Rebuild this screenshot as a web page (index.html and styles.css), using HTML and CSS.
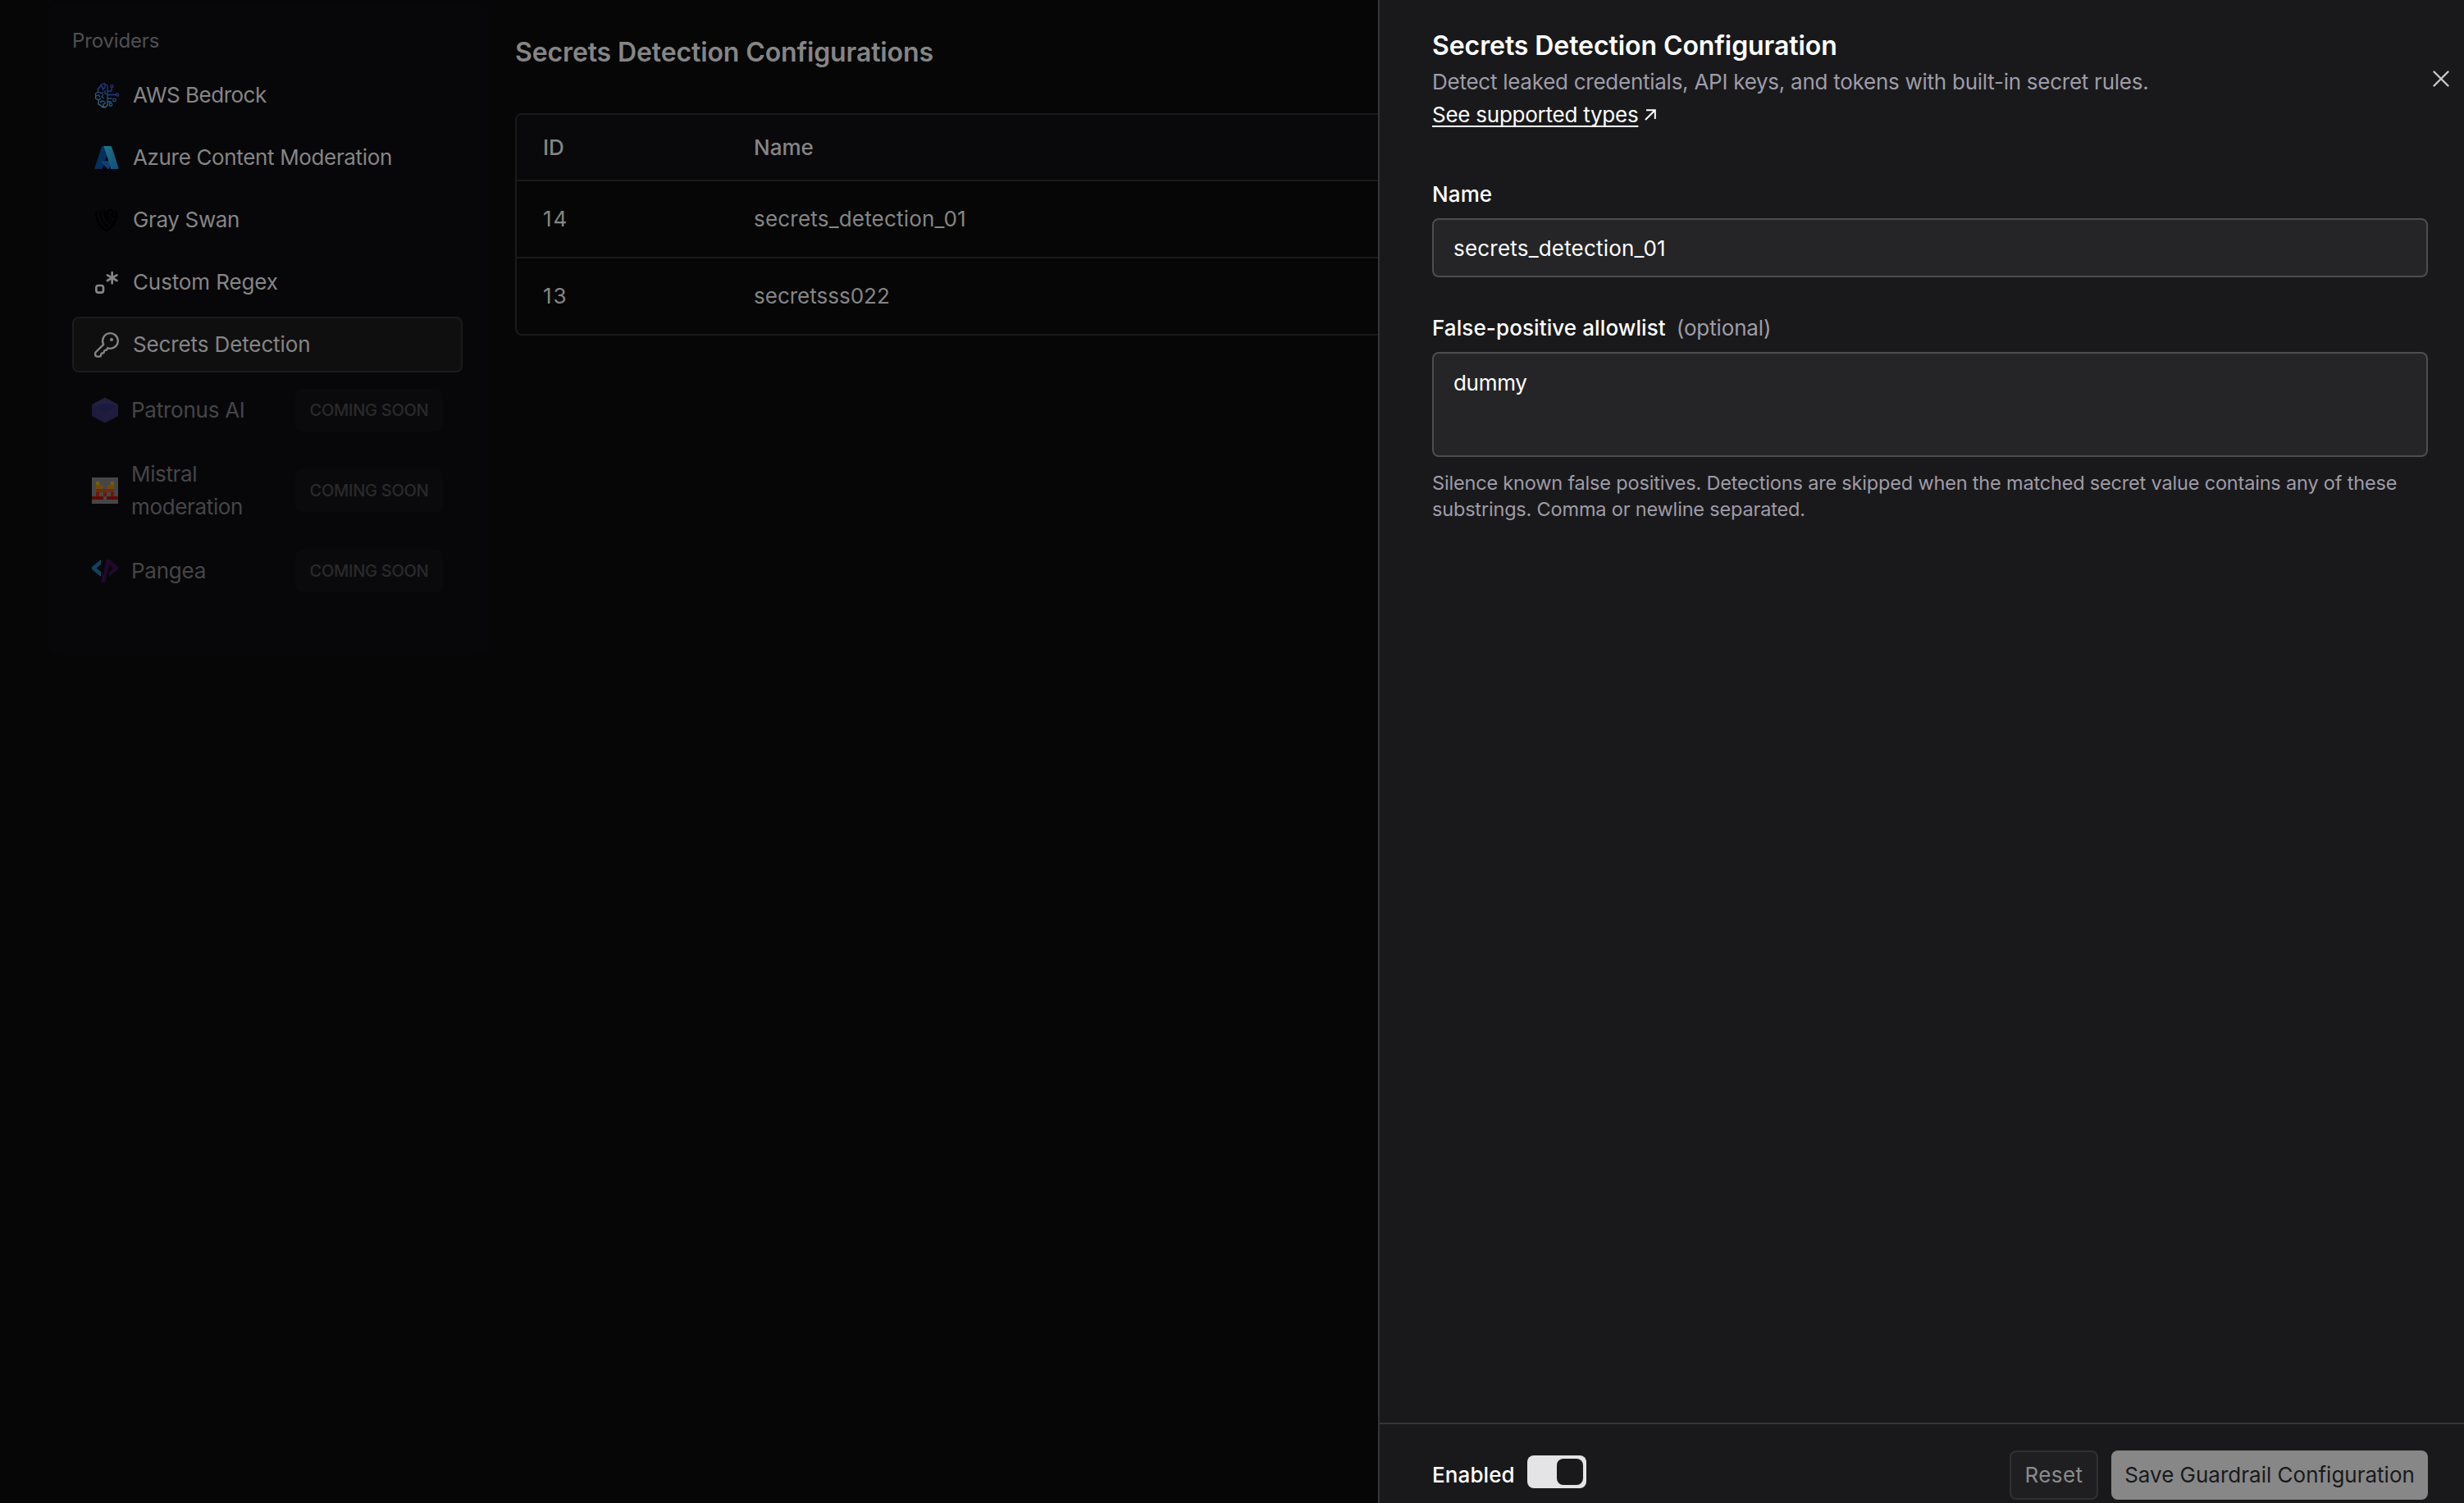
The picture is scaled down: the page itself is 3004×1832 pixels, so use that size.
FILE: index.html
```html
<!DOCTYPE html>
<html lang="en">
    <head>
        <meta charset="UTF-8">
        <title>Guardrails</title>

        <link rel="stylesheet" href="styles.css">
    </head>
    <body>
        <div class="page">
            <aside class="sidebar">
                <p class="sidebar-title">Providers</p>

                <a class="provider">
                    <svg class="icon" viewBox="0 0 32 32" fill="none" stroke="url(#brain)" stroke-width="1.3">
                        <defs>
                            <linearGradient id="brain" gradientUnits="userSpaceOnUse" x1="6" y1="30" x2="24" y2="3">
                                <stop offset="0" stop-color="#477983"/>
                                <stop offset="0.45" stop-color="#1c4d85"/>
                                <stop offset="1" stop-color="#2d2480"/>
                            </linearGradient>
                        </defs>
                        <path d="M17 4.5L13 1.8 9 3.5 8 6 5.5 8v4L2.6 14v6L6 22v5l3 1.5 1.5 2L14 31l3-2.5z"/>
                        <path d="M9 4l2.5 3v3M14 3v4l-2 1M6 12l4 2 2-2M3 17l3-1 2 2M12 15l-2 3 3 1.5M6 22l3-2M8 25l3-2 3 1M12 30v-3l3-2M14 10v4l2 1"/>
                        <path d="M17 11h5V7M17 15.5h10.5M17 20h5.5M17 24h4v2"/>
                        <circle cx="22.5" cy="5" r="1.6"/><circle cx="29" cy="15.5" r="1.6"/>
                        <circle cx="25.5" cy="22" r="1.8"/><circle cx="21" cy="27.5" r="1.8"/>
                    </svg>
                    <span class="ls-aws">AWS Bedrock</span>
                </a>
                <a class="provider">
                    <svg class="icon" viewBox="0 0 32 32">
                        <defs>
                            <linearGradient id="azure" x1="0" y1="0" x2="1" y2="1">
                                <stop offset="0" stop-color="#207689"/>
                                <stop offset="1" stop-color="#124a78"/>
                            </linearGradient>
                        </defs>
                        <path fill="#052f5c" d="M11.3 2h9L10.9 29q-.4 1-1.5 1H2.6q-1.5 0-1.1-1.5L9.8 3q.4-1 1.500-1z"/>
                        <path fill="#0d4278" d="M9.8 20.3h13L19 30h-1.5l-8-7.7q-.7-1 .3-2z"/>
                        <path fill="url(#azure)" d="M12 2h8.7q1.1 0 1.5 1l8.3 25.500q.4 1.500-1.1 1.500H20q1.400-.2 1-1.500L12.700 3Q12.500 2.200 12 2z"/>
                    </svg>
                    <span class="ls-azure">Azure Content Moderation</span>
                </a>
                <a class="provider">
                    <svg class="icon" viewBox="0 0 32 32" fill="none" stroke="#000" stroke-width="2.8">
                        <path d="M3.5 5c-.5 11 3 19 12 24C23 25 28 18 28 10V5"/>
                        <path d="M8 4.500c0 9 2 14 9.500 20M13 3.500c-.5 7 1 12 8 17.500M18 14c-2.500-5-1-10 2.500-10s4.500 2.500 3 5.500M18 11c1.500 4 3 6 6 7M21 8c1 3 3 5 6 5"/>
                    </svg>
                    <span class="ls-azure">Gray Swan</span>
                </a>
                <a class="provider">
                    <svg class="icon" viewBox="0 0 24 24" fill="none" stroke="#858585" stroke-width="2" stroke-linecap="round" stroke-linejoin="round">
                        <path d="M17 3v10M12.67 5.5l8.66 5M12.67 10.5l8.66-5"/>
                        <rect x="2.500" y="15" width="6.500" height="6.500" rx="2"/>
                    </svg>
                    <span class="ls-regex">Custom Regex</span>
                </a>
                <a class="provider active">
                    <svg class="icon" viewBox="0 0 32 32" fill="none" stroke="#858585" stroke-width="2.4" stroke-linecap="round" stroke-linejoin="round">
                        <path d="M12.2 15.8L3 25q-.9.9-.9 2v1q0 2.6 2.6 2.6h2.4q2 0 2-2 0-2 2-2.2 1.6 0 1.7-1.8.2-1.6 1.8-1.7 1 0 1.7-.8l.9-1.900A9.300 9.300 0 1 0 12.200 15.800z"/>
                        <circle cx="22" cy="10" r="2" fill="#858585" stroke="none"/>
                    </svg>
                    <span class="ls-regex">Secrets Detection</span>
                </a>

                <!-- not available yet -->
                <div class="provider-soon">
                    <svg class="icon" viewBox="0 0 32 32">
                        <path fill="#23203f" d="M16 .5L32 9 16 17.5 0 9z"/>
                        <path fill="#1d1b3e" d="M0 9l16 8.5v14L0 23z"/>
                        <path fill="#201c3c" d="M32 9l-16 8.5v14L32 23z"/>
                        <path fill="#1a1942" d="M16 7l12 3-12 6.5L6 11z"/>
                    </svg>
                    <span class="soon-name">Patronus AI</span>
                    <span class="badge">COMING SOON</span>
                </div>
                <div class="provider-soon">
                    <svg class="icon" viewBox="0 0 32 32" shape-rendering="crispEdges">
                        <path fill="#464646" d="M0 0h32v32H0z"/>
                        <path fill="#74600a" d="M5 5h4v4H5zM23 5h4v4h-4z"/>
                        <path fill="#74470a" d="M5 9h8v5H5zM19 9h8v5h-8z"/>
                        <path fill="#6a2d0c" d="M5 14h22v4H5z"/>
                        <path fill="#681a0c" d="M5 18h4v5H5zM14 18h4v5h-4zM23 18h4v5h-4z"/>
                        <path fill="#5c0c08" d="M0 23h14v4H0zM18 23h14v4H18z"/>
                    </svg>
                    <span class="soon-name soon-wide">Mistral moderation</span>
                    <span class="badge">COMING SOON</span>
                </div>
                <div class="provider-soon">
                    <svg class="icon" viewBox="0 0 32 32">
                        <path fill="#14425c" d="M11 2v6L5.5 12.5 11 17v6L0 14v-3z"/>
                        <path fill="#1f0a2b" d="M18 2h4l10 9v3L21 23v-6l5-4.5L21.5 9 16 30h-5z"/>
                    </svg>
                    <span class="soon-name">Pangea</span>
                    <span class="badge">COMING SOON</span>
                </div>
            </aside>

            <main class="content">
                <h1>Secrets Detection Configurations</h1>
                <div class="table">
                    <div class="row head"><span>ID</span><span>Name</span></div>
                    <div class="row"><span class="id">14</span><span class="ls-input">secrets_detection_01</span></div>
                    <div class="row"><span class="id">13</span><span>secretsss022</span></div>
                </div>
            </main>
        </div>

        <section class="drawer">
            <svg class="close" viewBox="0 0 20 20" stroke="#c8c8c8" stroke-width="2.4" stroke-linecap="round">
                <path d="M1.5 1.5l17 17M18.5 1.5l-17 17"/>
            </svg>
            <div class="drawer-body">
                <h2>Secrets Detection Configuration</h2>
                <p class="desc">Detect leaked credentials, API keys, and tokens with built-in secret rules.</p>
                <p class="link-line">
                    <a class="link">See supported types</a>
                    <svg class="arrow" viewBox="0 0 14 14" fill="none" stroke="#fff" stroke-width="2">
                        <path d="M1 13L12.5 1.500M2 1.200h10.800V12"/>
                    </svg>
                </p>

                <div class="label">Name</div>
                <div class="input ls-input">secrets_detection_01</div>

                <div class="label label-allow">False-positive allowlist <span class="optional">(optional)</span></div>
                <div class="input textarea">dummy</div>
                <p class="hint">Silence known false positives. Detections are skipped when the matched secret value contains any of these substrings. Comma or newline separated.</p>
            </div>

            <footer class="drawer-footer">
                <span class="enabled">Enabled</span>
                <span class="toggle"><span class="thumb"></span></span>
                <button class="btn reset">Reset</button>
                <button class="btn save">Save Guardrail Configuration</button>
            </footer>
        </section>
    </body>
</html>
```
FILE: styles.css
```css
*{
    box-sizing: border-box;
}
body{
    margin: 0;
    height: 1832px;
    overflow: hidden;
    background-color: #060606;
    color: #858585;
    font-family: Inter, "Liberation Sans", sans-serif;
    font-size: 26px;
    line-height: 40px;
}
p,h1,h2{
    margin: 0;
}
.page{
    display: flex;
    gap: 32px;
    padding: 3px 0 0 57px;
}

/* sidebar */
.sidebar{
    width: 539px;
    height: 795px;
    padding: 31px 32px 0 31px;
    border-radius: 16px;
    background-color: #070709;
}
.sidebar-title{
    margin-bottom: 16px;
    color: #4f4f54;
    font-size: 24px;
    line-height: 32px;
    letter-spacing: -0.16px;
}
.provider{
    display: flex;
    align-items: center;
    gap: 16px;
    height: 68px;
    margin-bottom: 8px;
    padding: 0 24px;
    border: 2px solid transparent;
    border-radius: 8px;
}
.active{
    border-color: #1b1b1c;
    background-color: #0f0f10;
}
.icon{
    width: 32px;
    height: 32px;
    flex-shrink: 0;
}
.provider-soon{
    display: flex;
    align-items: center;
    gap: 16px;
    margin-bottom: 8px;
    padding: 12px 24px;
    color: #454548;
    letter-spacing: -0.25px;
}
.soon-name{
    flex: 1;
}
.soon-wide{
    letter-spacing: -0.35px;
}
.badge{
    width: 180px;
    height: 52px;
    border-radius: 8px;
    background-color: #0a0a0c;
    color: #2a2a2c;
    font-size: 20px;
    font-weight: 500;
    line-height: 52px;
    letter-spacing: -0.27px;
    text-align: center;
}
.ls-aws{
    letter-spacing: -0.5px;
}
.ls-azure{
    letter-spacing: -0.35px;
}
.ls-regex{
    letter-spacing: -0.12px;
}
.ls-input{
    letter-spacing: 0.2px;
}

/* configurations table */
.content{
    flex: 1;
    padding-top: 41px;
}
h1{
    margin-bottom: 54px;
    font-size: 32px;
    font-weight: 600;
    letter-spacing: -0.12px;
}
.table{
    border: 2px solid #1a1a1a;
    border-radius: 8px;
    overflow: hidden;
}
.row{
    display: grid;
    grid-template-columns: 257px 1fr;
    align-items: center;
    height: 94px;
    padding-left: 32px;
    border-bottom: 2px solid #1a1a1a;
}
.row:last-child{
    height: 92px;
    border-bottom: none;
}
.head{
    height: 81px;
    background-color: #09090b;
    font-weight: 500;
}
.id{
    letter-spacing: 2px;
}

/* drawer */
.drawer{
    position: absolute;
    top: 0;
    right: 0;
    display: flex;
    flex-direction: column;
    width: 1324px;
    height: 1832px;
    border-left: 2px solid #353538;
    background-color: #19191b;
    color: #fff;
}
.close{
    position: absolute;
    top: 86px;
    right: 18px;
    width: 20px;
    height: 20px;
}
.drawer-body{
    flex: 1;
    padding: 36px 44px 0 64px;
}
h2{
    margin-bottom: 4px;
    font-size: 32px;
    font-weight: 600;
    letter-spacing: -0.08px;
}
.desc{
    color: #9f9ca8;
    letter-spacing: -0.26px;
}
.link-line{
    display: flex;
    align-items: center;
    gap: 8px;
    margin-bottom: 59px;
}
.link{
    letter-spacing: -0.25px;
    text-decoration: underline;
    text-decoration-thickness: 2px;
    text-underline-offset: 4px;
    text-decoration-skip-ink: none;
}
.arrow{
    width: 14px;
    height: 14px;
}
.label{
    margin-bottom: 11px;
    font-weight: 500;
    line-height: 36px;
    letter-spacing: 0.1px;
}
.optional{
    margin-left: 6px;
    color: #9f9ca8;
    font-weight: 400;
    letter-spacing: -0.13px;
}
.input{
    height: 72px;
    padding: 15px 24px;
    border: 2px solid #4c4d4f;
    border-radius: 8px;
    background-color: #252527;
}
.label-allow{
    margin-top: 44px;
}
.textarea{
    height: 128px;
    padding-top: 16px;
    letter-spacing: -0.3px;
}
.hint{
    margin-top: 16px;
    color: #9f9ca8;
    font-size: 23.5px;
    line-height: 32px;
    letter-spacing: -0.18px;
}
.drawer-footer{
    display: flex;
    align-items: flex-start;
    height: 98px;
    padding: 32px 44px 0 64px;
    border-top: 2px solid #353538;
}
.enabled{
    width: 116px;
    font-weight: 500;
    line-height: 60px;
    letter-spacing: 0.1px;
}
.toggle{
    width: 72px;
    height: 40px;
    margin: 6px auto 0 0;
    padding: 4px 4px 4px 36px;
    border-radius: 8px;
    background-color: #e4e4e6;
}
.thumb{
    display: block;
    width: 32px;
    height: 32px;
    border-radius: 8px;
    background-color: #19191b;
}
.btn{
    height: 60px;
    padding: 0 0 1px;
    border: none;
    border-radius: 8px;
    font-family: inherit;
    font-size: 26px;
}
.reset{
    width: 108px;
    margin-right: 16px;
    border: 2px solid #303033;
    background-color: #1f1f21;
    color: #8b8b8c;
    letter-spacing: 0.4px;
}
.save{
    width: 386px;
    background-color: #878788;
    color: #19191b;
}
```
